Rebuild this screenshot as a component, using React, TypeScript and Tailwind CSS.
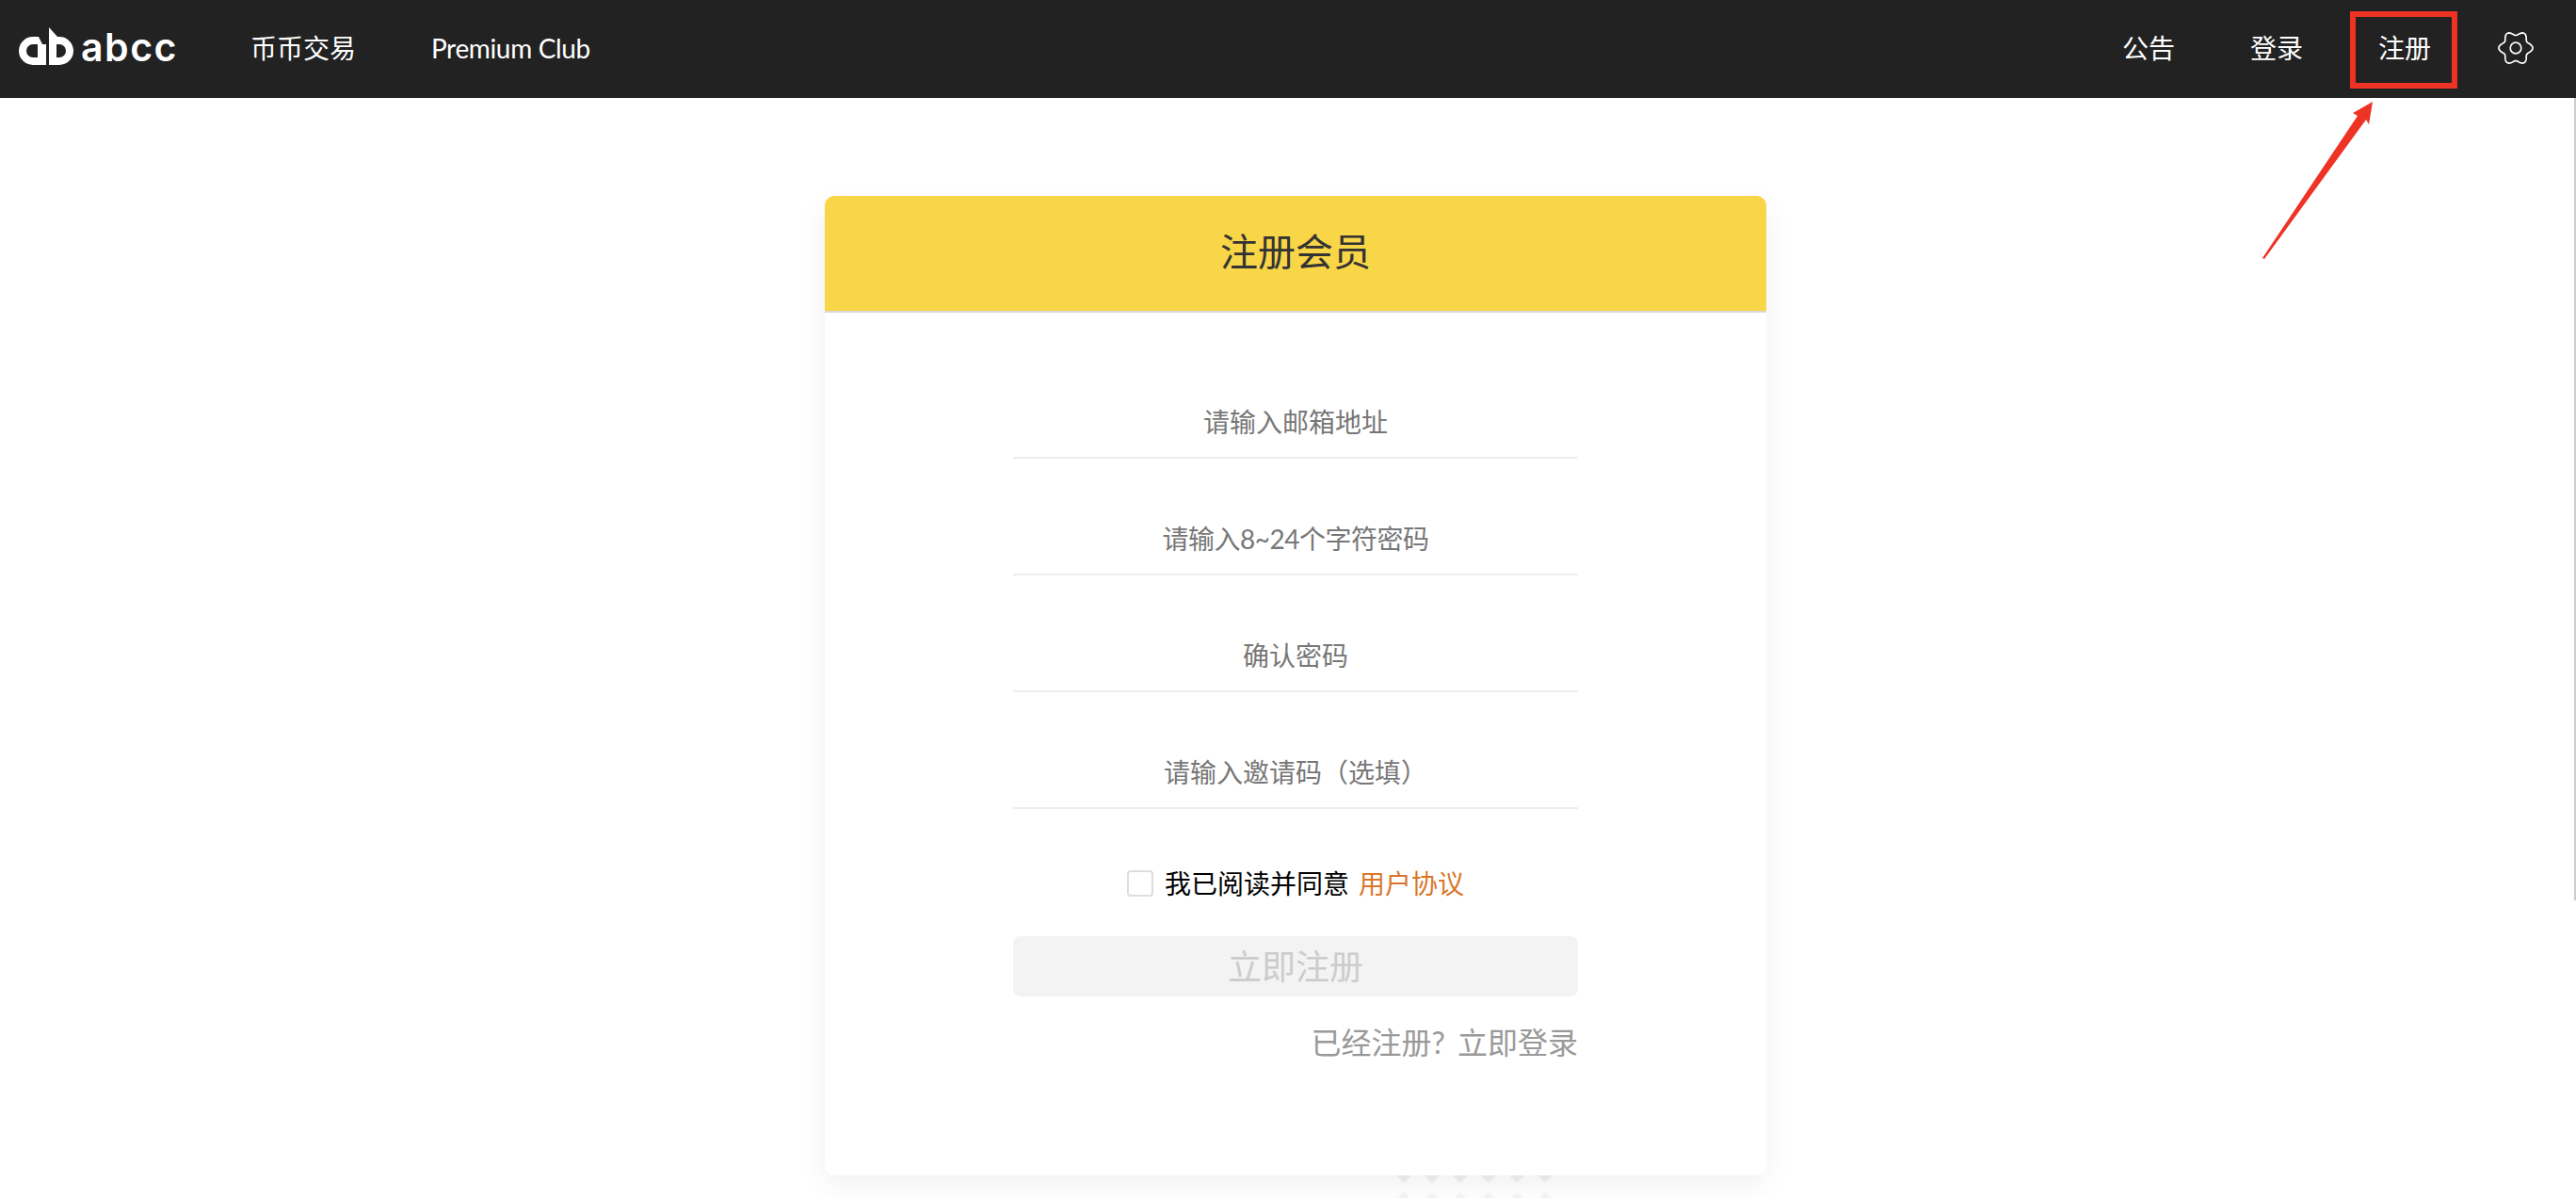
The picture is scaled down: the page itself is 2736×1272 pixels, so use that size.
import { Fragment } from 'react';

const fields = ['请输入邮箱地址', '请输入8~24个字符密码', '确认密码', '请输入邀请码（选填）'];

// six soft lobes, same outline as the settings cog in the nav
const cogPath = Array.from({ length: 120 }, (_, i) => {
  const a = (i / 120) * Math.PI * 2;
  const r = 15.75 + 2.25 * Math.cos(6 * a);
  return `${i === 0 ? 'M' : 'L'}${(20 + r * Math.cos(a)).toFixed(2)} ${(20 + r * Math.sin(a)).toFixed(2)}`;
}).join(' ') + ' Z';

function LogoMark() {
  return (
    <svg width="66" height="46" viewBox="0 0 66 46" fill="#fff" fillRule="evenodd">
      <path d="M25 13H19A15 15 0 0 0 19 43H33V21H29ZM24 21H19A7 7 0 0 0 19 35H24Z" />
      <path d="M36 3L45 13H47A15 15 0 0 1 47 43H36ZM44 21V35H47A7 7 0 0 0 47 21Z" />
    </svg>
  );
}

function Cog() {
  return (
    <svg width="40" height="40" viewBox="0 0 40 40" fill="none" stroke="#fff" strokeWidth="1.7">
      <path d={cogPath} />
      <circle cx="20" cy="20" r="5.8" />
    </svg>
  );
}

export default function App() {
  return (
    <div className="relative h-[1272px] overflow-hidden bg-white font-['Lato','Noto_Sans_CJK_SC',sans-serif]">
      <header className="flex h-[104px] items-center bg-[#222222] pb-[2px] pl-[16px] pr-[44px] text-[28px] text-white">
        <div className="mb-[4px] flex items-center">
          <LogoMark />
          <span className="ml-[4px] mt-[2px] font-['Inter',sans-serif] text-[41px] font-semibold leading-none tracking-[1.5px]">abcc</span>
        </div>
        <nav className="ml-[77px] flex items-center gap-[80px]">
          <a>币币交易</a>
          <a className="tracking-[-0.35px]">Premium Club</a>
        </nav>
        <div className="ml-auto flex items-center">
          <a>公告</a>
          <a className="ml-[80px]">登录</a>
          <a className="ml-[80px]">注册</a>
          <span className="ml-[70px]">
            <Cog />
          </span>
        </div>
      </header>

      <main className="flex justify-center pl-[16px] pt-[104px]">
        <div className="relative w-[1000px]">
          {/* dots sit behind the card, only their last rows show */}
          <div className="absolute left-[608px] top-[1031px] grid grid-cols-6 gap-x-[16px] gap-y-[16px] blur-[1px]">
            {Array.from({ length: 6 }, (_, i) => (
              <span key={`a${i}`} className="h-[14px] w-[14px] rotate-45 bg-[#efefef]" />
            ))}
            {Array.from({ length: 6 }, (_, i) => (
              <span key={`b${i}`} className="h-[14px] w-[14px] rotate-45 bg-[#f3f3f3]" />
            ))}
          </div>

          <div className="relative h-[1040px] overflow-hidden rounded-[10px] bg-white shadow-[0_10px_32px_rgba(0,0,0,0.06)]">
            <div className="flex h-[124px] items-center justify-center border-b-2 border-[#d9d9d9] bg-[#f9d548] pb-[4px] text-[40px] text-[#333333]">
              注册会员
            </div>
            <form className="mx-auto flex w-[600px] flex-col pt-[79px]">
              {fields.map((f, i) => (
                <Fragment key={f}>
                  <input
                    placeholder={f}
                    className={`h-[76px] w-full border-b-2 border-[#ebedf0] text-center text-[28px] outline-none placeholder:text-[#777777] ${i > 0 ? 'mt-[48px]' : ''} ${i === 1 ? 'tracking-[-0.5px]' : ''}`}
                  />
                </Fragment>
              ))}
              <label className="mt-[65px] flex h-[28px] items-center justify-center text-[28px] text-black">
                <span className="mr-[12px] h-[28px] w-[28px] rounded-[4px] border-2 border-[#dddddd] bg-white" />
                我已阅读并同意
                <a className="ml-[10px] text-[#d9762b]">用户协议</a>
              </label>
              <button
                type="button"
                className="mt-[42px] h-[64px] rounded-[8px] bg-[#f3f3f3] text-[36px] text-[#cccccc]"
              >
                立即注册
              </button>
              <a className="mt-[27px] text-right text-[32px] leading-[44px] text-[#999999] [word-spacing:5px]">已经注册? 立即登录</a>
            </form>
          </div>
        </div>
      </main>

      {/* red annotation drawn on top of the screenshot */}
      <div className="absolute left-[2496px] top-[12px] h-[82px] w-[114px] border-[6px] border-[#ee3224]" />
      <svg className="absolute left-[2400px] top-[105px]" width="124" height="172" viewBox="0 0 124 172">
        <path d="M3 169L104 18L99 15L120 3L116 27L113 22L5 170Z" fill="#ee3224" />
      </svg>

      {/* scrollbar sliver on the right edge */}
      <div className="absolute right-0 top-[104px] h-[852px] w-[2px] bg-[#cccccc]" />
    </div>
  );
}
